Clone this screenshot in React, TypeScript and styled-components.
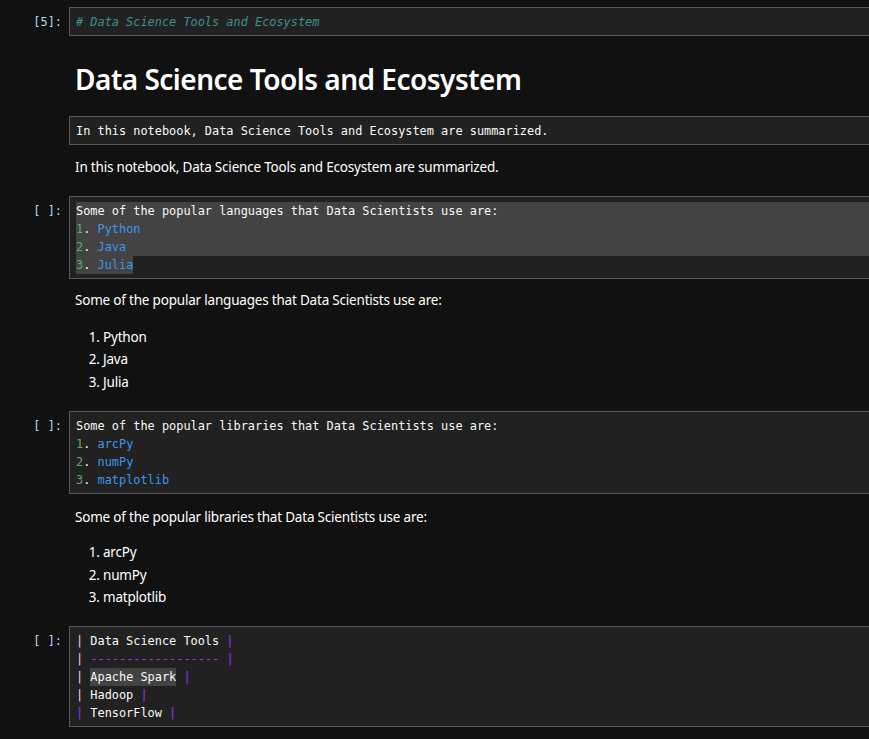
import React from "react";
import styled, { createGlobalStyle } from "styled-components";

const Global = createGlobalStyle`
  html, body { margin: 0; padding: 0; background: #111111; }
  body { width: 869px; height: 739px; overflow: hidden; }
`;

const Notebook = styled.div`
  display: flex;
  flex-direction: column;
  padding-top: 7px;
  background: #111111;
  min-height: 739px;
  box-sizing: border-box;
`;

const CellRow = styled.div<{ $mt?: number }>`
  display: flex;
  align-items: flex-start;
  margin-top: ${(p) => p.$mt ?? 0}px;
`;

const Prompt = styled.div`
  width: 69px;
  flex: none;
  box-sizing: border-box;
  padding: 6px 7px 0 0;
  text-align: right;
  font-family: "DejaVu Sans Mono", "Liberation Mono", monospace;
  font-size: 11.9px;
  line-height: 18px;
  color: #b4dcf4;
`;

const Editor = styled.div`
  flex: 1;
  background: #212121;
  border: 1px solid #5a5a5a;
  border-right: none;
  padding: 5px 0 4px 6px;
  font-family: "DejaVu Sans Mono", "Liberation Mono", monospace;
  font-size: 11.9px;
  line-height: 18px;
  color: #f8f8f8;
  white-space: pre;
`;

const Line = styled.div<{ $sel?: boolean }>`
  height: 18px;
  background: ${(p) => (p.$sel ? "#434343" : "transparent")};
`;

const Sel = styled.span`
  background: #434343;
  display: inline-block;
  height: 18px;
`;

const Comment = styled.span`
  color: #3f8f8f;
  font-style: italic;
`;

const Num = styled.span`
  color: #5fae5f;
`;

const Item = styled.span`
  color: #3e96ee;
`;

const PipeA = styled.span`
  color: #f0d6e6;
`;

const PipeB = styled.span`
  color: #9436f6;
`;

const Dashes = styled.span`
  color: #b22cff;
`;

const Output = styled.div<{ $mt?: number }>`
  margin: ${(p) => p.$mt ?? 0}px 0 0 75px;
  color: #ffffff;
  font-family: "Noto Sans", "Open Sans", sans-serif;
`;

const Heading = styled.h1`
  margin: 0;
  font-size: 28px;
  font-weight: 600;
  line-height: 40px;
  letter-spacing: -0.5px;
`;

const Para = styled.p`
  margin: 0;
  font-size: 13.5px;
  line-height: 22px;
  letter-spacing: -0.2px;
`;

const List = styled.ol<{ $mt?: number }>`
  margin: ${(p) => p.$mt ?? 14}px 0 0 0;
  padding-left: 28px;
  font-size: 13.5px;
  letter-spacing: -0.2px;
  line-height: 22.4px;
  li { padding-left: 0; }
`;

function Code({ prompt, mt, children }: { prompt: string; mt?: number; children: React.ReactNode }) {
  return (
    <CellRow $mt={mt}>
      <Prompt>{prompt}</Prompt>
      <Editor>{children}</Editor>
    </CellRow>
  );
}

function Markdown({ mt, children }: { mt?: number; children: React.ReactNode }) {
  return (
    <CellRow $mt={mt}>
      <Prompt />
      <Editor>{children}</Editor>
    </CellRow>
  );
}

export default function App() {
  return (
    <>
      <Global />
      <Notebook>
        <Code prompt="[5]:">
          <Line>
            <Comment># Data Science Tools and Ecosystem</Comment>
          </Line>
        </Code>

        <Output $mt={23}>
          <Heading>Data Science Tools and Ecosystem</Heading>
        </Output>

        <Markdown mt={17}>
          <Line>In this notebook, Data Science Tools and Ecosystem are summarized.</Line>
        </Markdown>

        <Output $mt={11}>
          <Para>In this notebook, Data Science Tools and Ecosystem are summarized.</Para>
        </Output>

        <Code prompt="[ ]:" mt={18}>
          <Line $sel>Some of the popular languages that Data Scientists use are:</Line>
          <Line $sel>
            <Num>1</Num>. <Item>Python</Item>
          </Line>
          <Line $sel>
            <Num>2</Num>. <Item>Java</Item>
          </Line>
          <Line>
            <Sel>
              <Num>3</Num>. <Item>Julia</Item>
            </Sel>
          </Line>
        </Code>

        <Output $mt={10}>
          <Para>Some of the popular languages that Data Scientists use are:</Para>
          <List $mt={15}>
            <li>Python</li>
            <li>Java</li>
            <li>Julia</li>
          </List>
        </Output>

        <Code prompt="[ ]:" mt={18}>
          <Line>Some of the popular libraries that Data Scientists use are:</Line>
          <Line>
            <Num>1</Num>. <Item>arcPy</Item>
          </Line>
          <Line>
            <Num>2</Num>. <Item>numPy</Item>
          </Line>
          <Line>
            <Num>3</Num>. <Item>matplotlib</Item>
          </Line>
        </Code>

        <Output $mt={12}>
          <Para>Some of the popular libraries that Data Scientists use are:</Para>
          <List $mt={13}>
            <li>arcPy</li>
            <li>numPy</li>
            <li>matplotlib</li>
          </List>
        </Output>

        <Code prompt="[ ]:" mt={18}>
          <Line>
            <PipeA>|</PipeA> Data Science Tools <PipeB>|</PipeB>
          </Line>
          <Line>
            <PipeA>|</PipeA> <Dashes>------------------</Dashes> <PipeB>|</PipeB>
          </Line>
          <Line>
            <PipeA>|</PipeA> <Sel>Apache Spark</Sel> <PipeB>|</PipeB>
          </Line>
          <Line>
            <PipeA>|</PipeA> Hadoop <PipeB>|</PipeB>
          </Line>
          <Line>
            <PipeB>|</PipeB> TensorFlow <PipeB>|</PipeB>
          </Line>
        </Code>
      </Notebook>
    </>
  );
}
